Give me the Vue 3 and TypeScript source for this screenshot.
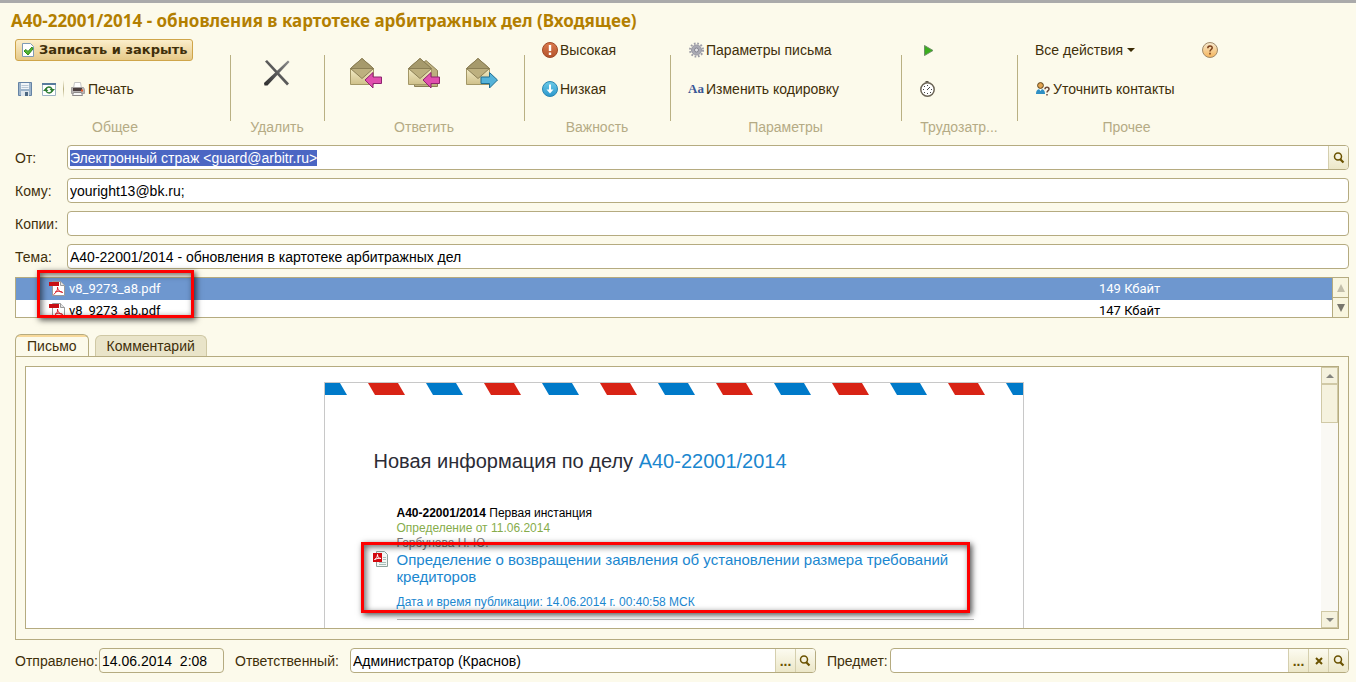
<script setup lang="ts">
import { onMounted, ref } from 'vue'

interface Attachment {
  name: string
  size: string
}

const attachments: Attachment[] = [
  { name: 'v8_9273_a8.pdf', size: '149 Кбайт' },
  { name: 'v8_9273_ab.pdf', size: '147 Кбайт' },
]

const from = ref('Электронный страж <guard@arbitr.ru>')
const to = ref('youright13@bk.ru;')
const copies = ref('')
const subject = ref('A40-22001/2014 - обновления в картотеке арбитражных дел')
const sent = ref('14.06.2014  2:08')
const owner = ref('Администратор (Краснов)')
const item = ref('')
const selected = ref(0)
const tab = ref<'letter' | 'comment'>('letter')
const fromInput = ref<HTMLInputElement | null>(null)

const stripes = Array.from({ length: 13 }, (_, i) => {
  const x = -15 + i * 58
  return {
    points: `${x},0 ${x + 30},0 ${x + 37},12 ${x + 7},12`,
    fill: i % 2 ? '#d82315' : '#007ac9',
  }
})

onMounted(() => {
  fromInput.value?.focus()
  fromInput.value?.select()
})
</script>

<template>
  <main class="window">
    <svg class="defs" aria-hidden="true">
      <defs>
        <linearGradient id="env" x1="0" y1="0" x2="0" y2="1">
          <stop offset="0" stop-color="#f3ecc6" />
          <stop offset="1" stop-color="#cfc08a" />
        </linearGradient>
        <linearGradient id="red" x1="0" y1="0" x2="0" y2="1">
          <stop offset="0" stop-color="#dc7a4e" />
          <stop offset="1" stop-color="#b4532c" />
        </linearGradient>
        <linearGradient id="blue" x1="0" y1="0" x2="0" y2="1">
          <stop offset="0" stop-color="#6ccbe8" />
          <stop offset="1" stop-color="#2b97cc" />
        </linearGradient>
        <linearGradient id="help" x1="0" y1="0" x2="0" y2="1">
          <stop offset="0" stop-color="#f7ead0" />
          <stop offset="1" stop-color="#f5b45a" />
        </linearGradient>
        <linearGradient id="dark" x1="0" y1="1" x2="1" y2="0">
          <stop offset="0" stop-color="#2c2c2c" />
          <stop offset="1" stop-color="#8c8c8c" />
        </linearGradient>
        <g id="lens">
          <circle cx="5" cy="4.500" r="3.500" fill="none" stroke="#6a5200" stroke-width="1.500" />
          <path d="M7 7l3.500 3.500" stroke="#6a5200" stroke-width="2.200" />
        </g>
        <g id="pdf">
          <path d="M3.500 .5h8l4 4v10h-12z" fill="#fff" stroke="#9a9a9a" />
          <path d="M11.500 .5v4h4" fill="#e4e4e4" stroke="#9a9a9a" />
          <path d="M0 1h10v4H0z" fill="#c80f14" />
          <path d="M8.500 6c.6 3-1.500 6-4 7.500M8.500 6c0 3 2 5 5.500 5.500M6 11c2-1 4-1 7 0" fill="none" stroke="#d8202a" />
        </g>
        <g id="mail">
          <path d="M1.500 11.500h23v16h-23z" fill="url(#env)" stroke="#a39766" />
          <path d="M1.500 11.500l11.500 10 11.500-10-11.500-10z" fill="#bdb07f" stroke="#8b7f55" />
          <path d="M1.500 11.500h23L13 1.500z" fill="#a69a6c" stroke="#8b7f55" />
        </g>
        <path id="arrow" d="M16 23l8-7.500v4.500h8.500v6.500H24V31z" fill="#e14fae" stroke="#8f2470" />
      </defs>
    </svg>

    <h1 class="title">A40-22001/2014 - обновления в картотеке арбитражных дел (Входящее)</h1>

    <section class="toolbar" aria-label="Команды">
      <div class="group general">
        <div class="row">
          <button class="primary" type="button">
            <svg width="14" height="16" viewBox="0 0 14 16">
              <path d="M1.500 1.500h8l3 3v10h-11z" fill="#fff" stroke="#7f9bb5" />
              <path d="M3 9l2-1.500 2 2 4-4.500 1 2-5 6z" fill="#56b531" stroke="#2c8a1c" />
            </svg>
            Записать и закрыть
          </button>
        </div>
        <div class="row tools">
          <button type="button" aria-label="Записать">
            <svg width="16" height="16" viewBox="0 0 16 16">
              <path d="M1.500 1.500h13v13h-13z" fill="#9db4ca" stroke="#6583a5" />
              <path d="M4 2h8v6H4z" fill="#f1f5f8" />
              <path d="M4.500 4.500h7M4.500 6.500h7" stroke="#b9c7d4" />
              <path d="M4 10h8v5H4z" fill="#dfe6ec" />
              <path d="M8 11h3v4H8z" fill="#4c6780" />
            </svg>
          </button>
          <button type="button" aria-label="Перечитать">
            <svg width="16" height="16" viewBox="0 0 16 16">
              <path d="M2.500 2.500h13v12h-13z" fill="#fff" stroke="#9db2c4" />
              <path d="M2 2h14v2H2z" fill="#587b9c" />
              <path d="M6 8c.8-2.500 4.500-2.700 6 0M12 10c-.8 2.500-4.500 2.700-6 0" fill="none" stroke="#2f7d32" stroke-width="1.500" />
              <path d="M9.500 8H15l-2.700 3zM8.500 10H3l2.700-3z" fill="#2f7d32" />
            </svg>
          </button>
          <span class="bar"></span>
          <button type="button">
            <svg width="16" height="16" viewBox="0 0 16 16">
              <path d="M4.500 1.500h6l1 6h-8z" fill="#fff" stroke="#c4c4c4" />
              <path d="M1.500 6.500h12l1 2v4h-13z" fill="#b8b4b4" stroke="#a5a1a1" />
              <path d="M3 7h9v3H3z" fill="#4c4040" />
              <path d="M11 9.500h2" stroke="#e4562b" stroke-width="2" />
              <path d="M3.500 11.500h8l1 3h-10z" fill="#f7f7f7" stroke="#8d8989" />
            </svg>
            Печать
          </button>
        </div>
        <div class="caption">Общее</div>
      </div>

      <div class="group">
        <div class="large">
          <button type="button" aria-label="Удалить">
            <svg width="32" height="32" viewBox="0 0 32 32">
              <path d="M4 4.500l2-1.500L28 26.500l-2 2z" fill="#5a5a5a" />
              <path d="M3 26L27 3.500l1.500 1.500L6.500 28.500 3.500 28.500z" fill="url(#dark)" />
            </svg>
          </button>
        </div>
        <div class="caption">Удалить</div>
      </div>

      <div class="group">
        <div class="large replies">
          <button type="button" aria-label="Ответить">
            <svg width="34" height="32" viewBox="0 0 34 32"><use href="#mail" /><use href="#arrow" /></svg>
          </button>
          <button type="button" aria-label="Ответить всем">
            <svg width="34" height="32" viewBox="0 0 34 32">
              <path d="M7.500 13.500l11.500-10 11.500 10v16h-23z" fill="#bdb07f" stroke="#8b7f55" />
              <use href="#mail" /><use href="#arrow" />
            </svg>
          </button>
          <button type="button" aria-label="Переслать">
            <svg width="34" height="32" viewBox="0 0 34 32">
              <use href="#mail" />
              <path d="M32.500 23l-8-7.500v4.500H16v6.500h8.500V31z" fill="#55b3d9" stroke="#1f6e92" />
            </svg>
          </button>
        </div>
        <div class="caption">Ответить</div>
      </div>

      <div class="group">
        <div class="row inset">
          <button type="button">
            <svg width="16" height="16" viewBox="0 0 16 16">
              <circle cx="8" cy="8" r="7.500" fill="url(#red)" stroke="#a04a28" />
              <path d="M6.800 3h2.400v6H6.800zM6.800 10.500h2.400V13H6.800z" fill="#fff" />
            </svg>
            Высокая
          </button>
        </div>
        <div class="row inset">
          <button type="button">
            <svg width="16" height="16" viewBox="0 0 16 16">
              <circle cx="8" cy="8" r="7.500" fill="url(#blue)" stroke="#2b86b2" />
              <path d="M7 3.500h2v5h2.500L8 12.500 4.500 8.500H7z" fill="#fff" />
            </svg>
            Низкая
          </button>
        </div>
        <div class="caption">Важность</div>
      </div>

      <div class="group">
        <div class="row inset">
          <button type="button">
            <svg width="16" height="16" viewBox="0 0 16 16">
              <circle cx="8.500" cy="8" r="6.500" fill="none" stroke="#9c9ca6" stroke-width="2" stroke-dasharray="1.700 1.700" />
              <circle cx="8.500" cy="8" r="5" fill="#aaaab4" stroke="#9797a2" />
              <circle cx="8.500" cy="8" r="2" fill="#e0e0e6" stroke="#85858f" />
            </svg>
            Параметры письма
          </button>
        </div>
        <div class="row inset">
          <button type="button"><span class="aa" aria-hidden="true">Aa</span>Изменить кодировку</button>
        </div>
        <div class="caption">Параметры</div>
      </div>

      <div class="group">
        <div class="row inset">
          <button type="button" aria-label="Начать">
            <svg width="16" height="16" viewBox="0 0 16 16"><path d="M5.500 3.500l8.500 5-8.500 5z" fill="#3aae1c" stroke="#6d8f66" /></svg>
          </button>
        </div>
        <div class="row inset">
          <button type="button" aria-label="Хронометраж">
            <svg width="16" height="16" viewBox="0 0 16 16">
              <path d="M6.500 .8h3" stroke="#5d5648" stroke-width="1.600" />
              <circle cx="8.500" cy="8.500" r="6.700" fill="#fff" stroke="#6b6455" stroke-width="1.500" />
              <path d="M8 9l3-3M8.500 4v1M8.500 12v1M4 8.500h1M12 8.500h1M5 5.500h1M5 11.500h1M11 11.500h1" stroke="#444" />
            </svg>
          </button>
        </div>
        <div class="caption">Трудозатр...</div>
      </div>

      <div class="group other">
        <div class="row spread">
          <button type="button">
            Все действия
            <svg width="8" height="6" viewBox="0 0 8 6"><path d="M0 1h8L4 5z" fill="#3b2b05" /></svg>
          </button>
          <button type="button" aria-label="Справка">
            <svg width="16" height="16" viewBox="0 0 16 16">
              <circle cx="8" cy="8" r="7.500" fill="url(#help)" stroke="#a08a6a" />
              <path d="M5.800 6.200c0-3 4.400-3 4.400-.4C10.200 7.500 8 7.500 8 9.500" fill="none" stroke="#7a3f1b" stroke-width="1.500" />
              <path d="M7.200 10.800h1.600v1.700H7.200z" fill="#7a3f1b" />
            </svg>
          </button>
        </div>
        <div class="row">
          <button type="button">
            <svg width="16" height="16" viewBox="0 0 16 16">
              <path d="M1 13c0-4 2-5 4.500-5S10 9 10 13z" fill="#2f8fc4" />
              <path d="M4 8l1.500 2L7 8z" fill="#fff" />
              <circle cx="5.500" cy="4.500" r="2.900" fill="#e3a552" stroke="#5c431b" />
              <path d="M10 8.200c0-2.500 4-2.500 4 0 0 1.500-2 1.500-2 3.300M12 13v1.600" fill="none" stroke="#6e4a3a" stroke-width="1.500" />
            </svg>
            Уточнить контакты
          </button>
        </div>
        <div class="caption">Прочее</div>
      </div>
    </section>

    <form class="fields" @submit.prevent>
      <label for="from">От:</label>
      <div class="box">
        <input id="from" ref="fromInput" v-model="from" type="text" />
        <button type="button" aria-label="Открыть отправителя"><svg width="12" height="12" viewBox="0 0 12 12"><use href="#lens" /></svg></button>
      </div>
      <label for="to">Кому:</label>
      <div class="box"><input id="to" v-model="to" type="text" /></div>
      <label for="copies">Копии:</label>
      <div class="box"><input id="copies" v-model="copies" type="text" /></div>
      <label for="subject">Тема:</label>
      <div class="box"><input id="subject" v-model="subject" type="text" /></div>
    </form>

    <section class="attachments" aria-label="Вложения">
      <div class="list">
        <table>
          <tbody>
            <tr v-for="(file, i) in attachments" :key="file.name" :class="{ active: selected === i }" @click="selected = i">
              <td>
                <span class="file"><svg width="16" height="16" viewBox="0 0 16 16"><use href="#pdf" /></svg>{{ file.name }}</span>
              </td>
              <td class="size">{{ file.size }}</td>
            </tr>
          </tbody>
        </table>
      </div>
      <div class="stepper">
        <button type="button" aria-label="Вверх"><svg width="8" height="8" viewBox="0 0 8 8"><path d="M4 0l4 8H0z" fill="#c2beaa" /></svg></button>
        <button type="button" aria-label="Вниз"><svg width="8" height="8" viewBox="0 0 8 8"><path d="M0 0h8L4 8z" fill="#77756c" /></svg></button>
      </div>
      <div class="mark mark-files"></div>
    </section>

    <div class="tabs" role="tablist">
      <button type="button" role="tab" :aria-selected="tab === 'letter'" :class="{ current: tab === 'letter' }" @click="tab = 'letter'">Письмо</button>
      <button type="button" role="tab" :aria-selected="tab === 'comment'" :class="{ current: tab === 'comment' }" @click="tab = 'comment'">Комментарий</button>
    </div>

    <section class="panel">
      <div class="viewer">
        <div class="page">
          <article class="card">
            <svg class="stripes" width="698" height="12" viewBox="0 0 698 12">
              <polygon v-for="s in stripes" :key="s.points" :points="s.points" :fill="s.fill" />
            </svg>
            <h2>Новая информация по делу <a href="#">А40-22001/2014</a></h2>
            <div class="entry">
              <p><b>А40-22001/2014</b> Первая инстанция</p>
              <p class="green">Определение от 11.06.2014</p>
              <p class="judge">Горбунова Н. Ю.</p>
              <div class="doc">
                <svg width="16" height="16" viewBox="0 0 16 16">
                  <path d="M3.500 .5h8l3 3v12h-11z" fill="#f2f7f5" stroke="#8fa39d" />
                  <path d="M10 6.500h3M10 8.500h3M6 11.500h7M6 13.500h7" stroke="#a9bdb8" />
                  <path d="M0 2h9v9H0z" fill="#d3080e" />
                  <path d="M1.500 8.500c2-.5 3-3 3-5 0 2.500 1.500 4 3.500 4-2-.5-4 0-6.500 1z" fill="none" stroke="#fff" />
                </svg>
                <a href="#">Определение о возвращении заявления об установлении размера требований кредиторов</a>
              </div>
              <p class="date">Дата и время публикации: 14.06.2014 г. 00:40:58 МСК</p>
              <hr />
            </div>
            <div class="mark mark-doc"></div>
          </article>
        </div>
        <div class="scroll">
          <button type="button" aria-label="Прокрутить вверх"><svg width="8" height="4" viewBox="0 0 8 4"><path d="M4 0l4 4H0z" fill="#85857f" /></svg></button>
          <div class="thumb"></div>
          <button type="button" class="down" aria-label="Прокрутить вниз"><svg width="8" height="4" viewBox="0 0 8 4"><path d="M0 0h8L4 4z" fill="#85857f" /></svg></button>
        </div>
      </div>
    </section>

    <form class="footer" @submit.prevent>
      <label for="sent">Отправлено:</label>
      <div class="box sent"><input id="sent" v-model="sent" type="text" readonly /></div>
      <label for="owner" class="owner-label">Ответственный:</label>
      <div class="box owner">
        <input id="owner" v-model="owner" type="text" />
        <button type="button" aria-label="Выбрать ответственного"><span class="dots">...</span></button>
        <button type="button" aria-label="Открыть ответственного"><svg width="12" height="12" viewBox="0 0 12 12"><use href="#lens" /></svg></button>
      </div>
      <label for="item" class="item-label">Предмет:</label>
      <div class="box item">
        <input id="item" v-model="item" type="text" />
        <button type="button" aria-label="Выбрать предмет"><span class="dots">...</span></button>
        <button type="button" aria-label="Очистить предмет"><svg width="8" height="8" viewBox="0 0 8 8"><path d="M1 1l6 6M7 1L1 7" stroke="#6a5200" stroke-width="2" /></svg></button>
        <button type="button" aria-label="Открыть предмет"><svg width="12" height="12" viewBox="0 0 12 12"><use href="#lens" /></svg></button>
      </div>
    </form>
  </main>
</template>

<style>
body {
  margin: 0;
  background: #fcfaeb;
}
</style>

<style scoped>
.window {
  box-sizing: border-box;
  min-height: 100vh;
  display: flex;
  flex-direction: column;
  border-top: 3px solid #aaaaaa;
  background: #fcfaeb;
  color: #3f2f0a;
  font: 14px/16px "Liberation Sans", Arial, sans-serif;
  overflow: hidden;
}
.defs {
  position: absolute;
  width: 0;
  height: 0;
}
button {
  display: flex;
  align-items: center;
  justify-content: center;
  padding: 0;
  border: 0;
  background: none;
  color: inherit;
  font: inherit;
  white-space: nowrap;
}
svg {
  flex: none;
  display: block;
}
.title {
  margin: 0;
  padding: 8px 11px 0;
  color: #b37f00;
  font: bold 17px/19px "Noto Sans", sans-serif;
}
.toolbar {
  display: grid;
  grid-template-columns: 230px 94px 200px 146px 231px 116px 1fr;
}
.group {
  display: grid;
  grid-template-rows: 39px 39px 10px 18px;
  background: linear-gradient(#b9b083, #b9b083) left 25px / 1px 66px no-repeat;
}
.general {
  padding: 0 15px;
  background: none;
}
.row {
  display: flex;
  align-items: center;
}
.row button {
  gap: 2px;
}
.inset {
  padding-left: 18px;
}
.large {
  grid-row: 1 / 3;
  display: flex;
  align-items: center;
  justify-content: center;
  padding-top: 8px;
}
.replies {
  gap: 24px;
}
.caption {
  grid-row: 4;
  text-align: center;
  color: #b5ab85;
  line-height: 18px;
}
.row .primary {
  gap: 4px;
  height: 22px;
  padding: 0 5px;
  border: 1px solid #cfa54a;
  border-radius: 3px;
  background: linear-gradient(#fbeecb, #e6c988);
  font: bold 13px/16px "DejaVu Sans", sans-serif;
}
.tools {
  gap: 7px;
  padding-left: 2px;
}
.bar {
  width: 1px;
  height: 18px;
  margin-right: -1px;
  background: linear-gradient(#fcfaeb, #b9b083, #fcfaeb);
}
.aa {
  width: 16px;
  color: #3a5796;
  font: bold 13px/16px "Liberation Serif", serif;
}
.other {
  grid-template-columns: 183px;
  padding-left: 18px;
}
.spread {
  justify-content: space-between;
}
.spread button {
  gap: 4px;
}
.fields {
  display: grid;
  grid-template-columns: 52px 1fr;
  row-gap: 8px;
  align-items: center;
  padding: 9px 7px 0 15px;
}
.box {
  box-sizing: border-box;
  display: flex;
  height: 25px;
  min-width: 0;
  border: 1px solid #b5ab80;
  border-radius: 4px;
  background: #fff;
  overflow: hidden;
}
.box input {
  flex: 1;
  min-width: 0;
  padding: 0 2px;
  border: 0;
  outline: 0;
  background: none;
  color: #000;
  font: inherit;
}
.box input::selection {
  background: #4b66c3;
  color: #fff;
}
.box button {
  width: 20px;
  box-sizing: border-box;
  border-left: 1px solid #d5cfae;
  background: linear-gradient(#fcfbf0, #ece7c8);
}
.dots {
  color: #6a5200;
  font-weight: bold;
}
.attachments {
  position: relative;
  display: flex;
  height: 39px;
  margin: 8px 7px 0 15px;
  border: 1px solid #b5ab80;
  background: #fff;
}
.list {
  flex: 1;
  overflow: hidden;
}
table {
  width: 100%;
  border-collapse: collapse;
  color: #000;
  font: 13px/16px Roboto, sans-serif;
}
tr {
  height: 22px;
}
tr.active {
  background: #6e97cf;
  color: #fff;
}
td {
  padding: 0;
}
.file {
  display: flex;
  align-items: center;
  gap: 4px;
  padding-left: 33px;
}
.size {
  width: 233px;
}
.stepper {
  display: flex;
  flex-direction: column;
  width: 15px;
  border-left: 1px solid #b5ab80;
  background: #f8f5df;
}
.stepper button {
  flex: 1;
}
.stepper button + button {
  border-top: 1px solid #b5ab80;
}
.mark {
  position: absolute;
  box-sizing: border-box;
  border: 3px solid #fe0000;
  box-shadow: 2px 2px 6px rgba(0, 0, 0, 0.7), inset 2px 2px 6px rgba(0, 0, 0, 0.6);
  pointer-events: none;
}
.mark-files {
  left: 21px;
  top: -8px;
  width: 157px;
  height: 48px;
}
.tabs {
  display: flex;
  align-items: flex-end;
  gap: 6px;
  margin: 16px 15px -1px;
}
.tabs button {
  height: 22px;
  padding: 0 11px;
  border: 1px solid #cfc8a4;
  border-bottom-color: #b5ab80;
  border-radius: 6px 6px 0 0;
  background: #e9e4c9;
}
.tabs .current {
  height: 23px;
  border-color: #b5ab80;
  border-bottom-color: #fcfaeb;
  background: linear-gradient(#f8d99a 2px, #fcfaeb 2px);
}
.panel {
  flex: 1;
  display: flex;
  margin: 0 7px 0 15px;
  padding: 9px 9px 10px;
  border: 1px solid #b5ab80;
}
.viewer {
  flex: 1;
  display: flex;
  border: 1px solid #b5ab80;
  background: #fff;
}
.page {
  flex: 1;
  height: 261px;
  overflow: hidden;
}
.card {
  position: relative;
  box-sizing: border-box;
  width: 700px;
  min-height: 320px;
  margin: 15px auto 0;
  border: 1px solid #c8c8c8;
}
.card a {
  color: #1b87cf;
  text-decoration: none;
}
h2 {
  margin: 54px 0 0 49px;
  color: #2b2b35;
  font-size: 20px;
  font-weight: normal;
  line-height: 24px;
}
.entry {
  margin: 33px 49px 0 72px;
  color: #000;
  font-size: 12px;
  line-height: 15px;
}
p {
  margin: 0;
}
.green {
  color: #86ac4b;
}
.judge {
  color: #777;
}
.doc {
  display: flex;
  gap: 8px;
  margin-left: -24px;
  font-size: 15px;
  line-height: 17px;
}
.date {
  margin-top: 10px;
  color: #1b87cf;
}
hr {
  margin: 9px 0 0;
  border: 0;
  border-top: 1px solid #bbb;
}
.mark-doc {
  left: 36px;
  top: 159px;
  width: 609px;
  height: 71px;
}
.scroll {
  display: flex;
  flex-direction: column;
  width: 17px;
  background: #faf9f4;
}
.scroll button,
.thumb {
  box-sizing: border-box;
  height: 17px;
  border: 1px solid #d0c9a6;
  background: #f5f2de;
}
.scroll .thumb {
  height: 39px;
}
.scroll .down {
  margin-top: auto;
}
.footer {
  display: flex;
  align-items: center;
  padding: 8px 7px 9px 15px;
}
.footer label {
  white-space: nowrap;
  width: 84px;
}
.sent {
  width: 125px;
  background: #fcfaeb;
}
.sent input {
  white-space: pre;
}
.footer .owner-label {
  width: 115px;
  margin-left: 11px;
}
.owner {
  flex: 466;
}
.footer .item-label {
  width: 63px;
  margin-left: 11px;
}
.item {
  flex: 459;
}
</style>
